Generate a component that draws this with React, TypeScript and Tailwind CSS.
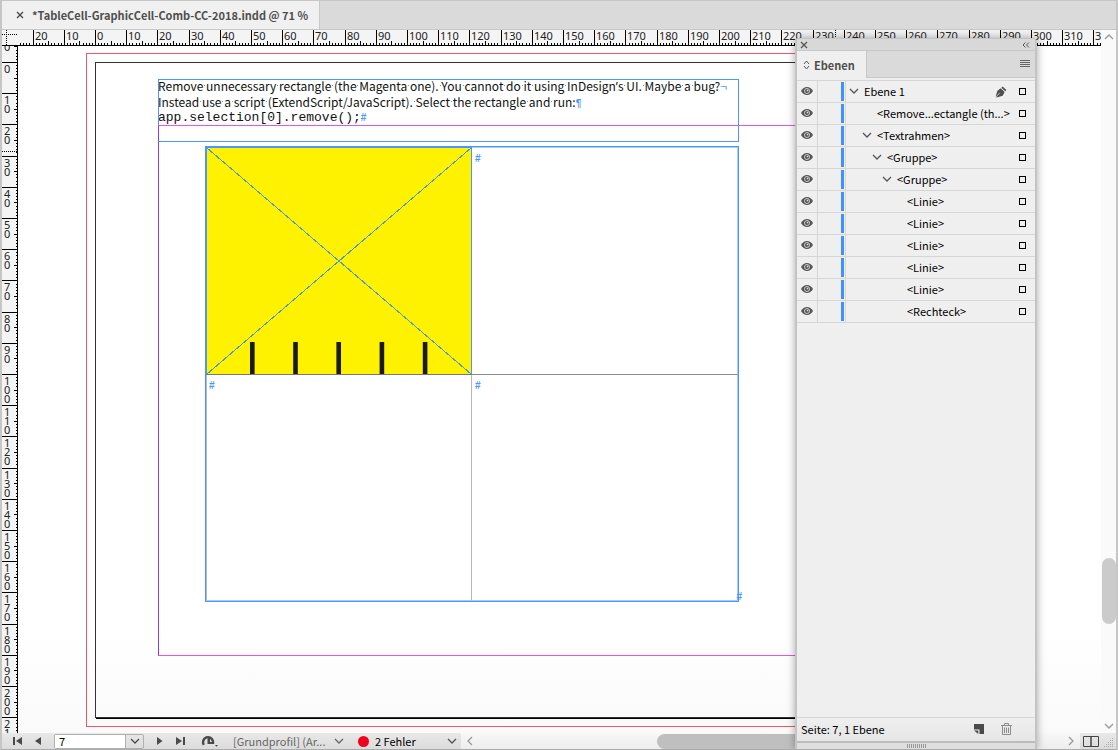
import React from "react";

const MM = 3.12; // pixels per millimetre at 71 %

interface Layer {
  name: string;
  indent: string;
  open?: boolean;
  pen?: boolean;
}

const layers: Layer[] = [
  { name: "Ebene 1", indent: "pl-[3px]", open: true, pen: true },
  { name: "<Remove...ectangle (th...>", indent: "pl-[31px]" },
  { name: "<Textrahmen>", indent: "pl-[16px]", open: true },
  { name: "<Gruppe>", indent: "pl-[26px]", open: true },
  { name: "<Gruppe>", indent: "pl-[36px]", open: true },
  { name: "<Linie>", indent: "pl-[61px]" },
  { name: "<Linie>", indent: "pl-[61px]" },
  { name: "<Linie>", indent: "pl-[61px]" },
  { name: "<Linie>", indent: "pl-[61px]" },
  { name: "<Linie>", indent: "pl-[61px]" },
  { name: "<Rechteck>", indent: "pl-[61px]" },
];

const range = (from: number, to: number) => Array.from({ length: to - from + 1 }, (_, i) => from + i);

const Chevron = ({ className = "", dir = "down" }: { className?: string; dir?: "down" | "up" | "left" | "right" }) => {
  const d = {
    down: "M1 3l4 4 4-4",
    up: "M1 7l4-4 4 4",
    left: "M7 1L3 5l4 4",
    right: "M3 1l4 4-4 4",
  }[dir];
  return (
    <svg viewBox="0 0 10 10" className={`h-[10px] w-[10px] shrink-0 ${className}`} fill="none" stroke="currentColor" strokeWidth="1.3">
      <path d={d} />
    </svg>
  );
};

const EyeIcon = () => (
  <svg viewBox="0 0 12 8" className="h-2 w-3">
    <path d="M0 4C1.6 1.4 3.6 0 6 0S10.4 1.4 12 4C10.4 6.6 8.4 8 6 8S1.6 6.6 0 4z" fill="#555" />
    <circle cx="6" cy="4" r="2.5" fill="none" stroke="#d8d8d8" strokeWidth=".9" />
    <circle cx="6.5" cy="3.6" r=".8" fill="#e4e4e4" />
  </svg>
);

const PenIcon = () => (
  <svg viewBox="0 0 12 12" className="h-3 w-3">
    <path d="M7.6.6l3.8 3.4-1.2 1.3-3.8-3.5zM5.7 2.3l3.9 3.6-1.9 3.8-6.2 1.7L.7 10.6l1.7-5.9z" fill="#4f4f4f" />
    <path d="M.8 11.2L4.8 6.8" stroke="#efefef" strokeWidth=".7" />
  </svg>
);

const HorizontalRuler = () => (
  <svg className="h-4 min-w-0 flex-1 bg-[#f4f4f4]" shapeRendering="crispEdges">
    {range(-24, 600).map((mm) => {
      const x = Math.round(77 + mm * MM);
      const h = mm % 10 === 0 ? 16 : mm % 5 === 0 ? 5 : 3;
      return <rect key={mm} x={x} y={16 - h} width="1" height={h} fill="#000" />;
    })}
    {range(-2, 60).map((n) => (
      <text key={n} x={Math.round(77 + n * 10 * MM) + 2} y="10" className="fill-[#222] font-['Noto_Sans',sans-serif] text-[11px]">
        {Math.abs(n * 10)}
      </text>
    ))}
    <path d="M817.5 0v16" stroke="#000" strokeDasharray="1 1" />
    <rect x="0" y="15" width="100%" height="1" fill="#000" />
  </svg>
);

const VerticalRuler = () => (
  <svg className="h-full w-4 shrink-0 bg-[#f4f4f4]" shapeRendering="crispEdges">
    {range(-5, 400).map((mm) => {
      const y = Math.round(16 + mm * MM);
      const w = mm % 10 === 0 ? 16 : mm % 5 === 0 ? 4 : 2;
      return <rect key={mm} x={16 - w} y={y} width={w} height="1" fill="#000" />;
    })}
    {range(-1, 40).map((n) =>
      String(Math.abs(n * 10))
        .split("")
        .map((digit, i) => (
          <text key={`${n}-${i}`} x="2" y={Math.round(16 + n * 10 * MM) + 11 + i * 9} className="fill-[#222] font-['Noto_Sans',sans-serif] text-[11px]">
            {digit}
          </text>
        ))
    )}
    <path d="M0 105.5h16" stroke="#000" strokeDasharray="1 1" />
    <rect x="15" y="0" width="1" height="100%" fill="#000" />
  </svg>
);

// Text with the blue space markers of the hidden characters view
const MarkedText = ({ children }: { children: string }) => (
  <>
    {children.split(" ").map((word, i) => (
      <React.Fragment key={i}>
        {i > 0 && <span className="bg-[linear-gradient(#4a96ff,#4a96ff)] bg-[length:1px_1px] bg-center bg-no-repeat"> </span>}
        {word}
      </React.Fragment>
    ))}
  </>
);

const EndMark = () => <span className="font-['Liberation_Sans',sans-serif] text-[10px] leading-none font-bold text-[#4a96ff]">#</span>;

const CombGraphic = () => (
  <svg viewBox="0 0 264 226" className="block h-[226px] w-[264px]">
    <rect width="264" height="226" fill="#fff200" />
    <path d="M0 0l264 226M264 0L0 226" stroke="#4a96d8" strokeWidth="1" shapeRendering="crispEdges" />
    {[43, 86.2, 129.4, 172.6, 215.8].map((x) => (
      <rect key={x} x={x} y="194" width="4.6" height="32" fill="#1a1a18" />
    ))}
  </svg>
);

const Pasteboard = () => (
  <main className="relative min-w-0 flex-1 overflow-hidden bg-linear-to-b from-white from-85% to-[#fafafa]">
    {/* bleed, page and margins */}
    <div className="absolute top-[7px] left-[68px] h-[674px] w-[946px] border border-[#f0566b]" />
    <div className="absolute top-[16px] left-[77px] h-[656px] w-[928px] border border-[#333] shadow-[1px_1px_0_#000]" />
    <div className="absolute top-[79px] left-[140px] h-[531px] w-[802px] border border-[#e256e8] border-l-[#8a3cf0]" />
    <div className="absolute top-[33px] left-[140px] h-[63px] w-[581px] border border-l-0 border-[#4a96ff]">
      <div className="-mt-[2px] text-[12px] leading-[16px] whitespace-nowrap text-[#111] font-['Noto_Sans_CJK_SC',sans-serif]">
        <p className="h-4">
          <MarkedText>Remove unnecessary rectangle (the Magenta one). You cannot do it using InDesign</MarkedText>
          <span className="font-['Noto_Sans',sans-serif] leading-none">’</span>
          <MarkedText>s UI. Maybe a bug?</MarkedText>
          <span className="text-[#4a96ff]">¬</span>
        </p>
        <p className="h-4">
          <MarkedText>Instead use a script (ExtendScript/JavaScript). Select the rectangle and run:</MarkedText>
          <span className="font-['Liberation_Sans',sans-serif] text-[10px] leading-none font-bold text-[#4a96ff]">¶</span>
        </p>
        <p className="h-4 font-['Liberation_Mono',monospace] text-[13px]">
          app.selection[0].remove();
          <EndMark />
        </p>
      </div>
    </div>
    <div className="absolute top-[33px] left-[140px] h-[46px] w-px bg-[#4a96ff]" />

    {/* threaded table frame */}
    <div className="absolute top-[100px] left-[187px] h-[456px] w-[534px] border border-[#4a96ff]">
      <table className="h-[454px] w-[532px] table-fixed border-separate border-spacing-0 leading-[14px]">
        <tbody>
          <tr>
            <td className="h-[228px] w-[266px] border-t border-r border-b border-l border-[#4a96ff] border-b-[#777] p-0 align-top">
              <CombGraphic />
            </td>
            <td className="h-[228px] border-t border-r border-b border-[#a5cbff] border-b-[#8a8a8a] p-0 pl-[3px] align-top">
              <EndMark />
            </td>
          </tr>
          <tr>
            <td className="h-[226px] w-[266px] border-r border-b border-l border-[#b8b8b8] border-b-[#a5cbff] p-0 pl-[2px] align-top">
              <EndMark />
            </td>
            <td className="h-[226px] border-r border-b border-[#a5cbff] p-0 pl-[3px] align-top">
              <EndMark />
            </td>
          </tr>
        </tbody>
      </table>
      <span className="absolute -right-1 -bottom-px flex leading-none">
        <EndMark />
      </span>
    </div>
  </main>
);

const LayersPanel = () => (
  <aside className="absolute top-[37px] right-[79px] bottom-0 flex w-[242px] flex-col rounded-t border-x-2 border-t border-[#c4c4c4] bg-[#efefef] shadow-[0_0_8px_rgba(0,0,0,0.35)]">
    <header className="flex h-[12px] shrink-0 items-center justify-between border-b border-[#c8c8c8] bg-[#d8d8d8] pr-[5px] pl-[3px]">
      <button aria-label="Schließen">
        <svg viewBox="0 0 8 8" className="h-2 w-2" stroke="#555" strokeWidth="1.3">
          <path d="M1 1l6 6M7 1L1 7" />
        </svg>
      </button>
      <button aria-label="Einklappen">
        <svg viewBox="0 0 8 6" className="h-[6px] w-2" fill="none" stroke="#555">
          <path d="M3.5.5L1 3l2.500 2.500M7 .5L4.500 3 7 5.500" />
        </svg>
      </button>
    </header>
    <div className="flex h-[27px] shrink-0">
      <h2 className="flex w-[70px] items-center gap-1 border-r border-[#c8c8c8] pl-[6px] text-[11px] leading-4 font-bold text-[#4f4f4f]">
        <svg viewBox="0 0 7 10" className="h-[10px] w-[7px]" fill="none" stroke="#555">
          <path d="M1 4l2.500-3L6 4M1 6l2.500 3L6 6" />
        </svg>
        Ebenen
      </h2>
      <div className="flex flex-1 items-center justify-end border-b border-[#c8c8c8] bg-[#dadada] pr-[5px]">
        <button aria-label="Bedienfeldmenü">
          <svg viewBox="0 0 10 8" className="h-2 w-[10px]" shapeRendering="crispEdges" fill="#666">
            <path d="M0 0h10v1H0zM0 2h10v1H0zM0 4h10v1H0zM0 6h10v1H0z" />
          </svg>
        </button>
      </div>
    </div>
    <ul className="mt-[2px] flex-1 border-t border-[#d6d6d6]">
      {layers.map((layer, i) => (
        <li key={i} className="flex h-[22px] items-stretch border-b border-[#d6d6d6]">
          <button aria-label="Sichtbarkeit" className="flex w-[21px] items-center justify-center border-r border-[#d6d6d6] pb-px">
            <EyeIcon />
          </button>
          <span className="my-px ml-[23px] w-[3px] bg-[#4190ff]" />
          <div className={`ml-px flex flex-1 items-center border-l border-[#d6d6d6] pb-px ${layer.indent}`}>
            {layer.open && <Chevron className="mr-[5px] text-[#555]" />}
            <span className="text-[11px] leading-4 whitespace-nowrap text-black">{layer.name}</span>
          </div>
          {layer.pen && (
            <span className="mr-3 flex items-center">
              <PenIcon />
            </span>
          )}
          <button aria-label={`${layer.name} auswählen`} className="mr-[9px] h-[7px] w-[7px] self-center border border-black" />
        </li>
      ))}
    </ul>
    <footer className="flex h-[26px] shrink-0 items-center border-t border-b-2 border-t-[#d6d6d6] border-b-[#bcbcbc] bg-linear-to-b from-[#efefef] to-[#e6e6e6] pr-[23px] pb-px pl-1">
      <span className="flex-1 text-[11px] leading-4">Seite: 7, 1 Ebene</span>
      <button aria-label="Neue Ebene" className="mr-[17px]">
        <svg viewBox="0 0 10 10" className="h-[10px] w-[10px]" fill="#4a4a4a">
          <path d="M0 0h10v10H5.500V5.500H0zM0 6.500h4.300V10z" />
        </svg>
      </button>
      <button aria-label="Löschen">
        <svg viewBox="0 0 11 12" className="h-3 w-[11px]" fill="none" stroke="#8c8c8c">
          <path d="M0 2.500h11M3.500 2V.5h4V2M1.500 3v8.500h8V3M3.500 4.500v5.500M5.500 4.500v5.500M7.500 4.500v5.500" />
        </svg>
      </button>
    </footer>
    <div className="flex h-[6px] shrink-0 justify-center bg-[#dedede] pt-px">
      <svg viewBox="0 0 19 4" className="h-1 w-[19px]" shapeRendering="crispEdges" fill="#999">
        {range(0, 9).map((n) => (
          <rect key={n} x={n * 2} width="1" height="4" />
        ))}
      </svg>
    </div>
  </aside>
);

const StatusBar = () => (
  <footer className="flex h-4 shrink-0 bg-linear-to-b from-[#e8e8e8] to-[#dcdcdc] text-[11px]">
    <div className="flex w-[459px] shrink-0 items-center pl-[11px] text-[#4a4a4a]">
      <button aria-label="Erste Seite">
        <svg viewBox="0 0 9 8" className="h-2 w-[9px]" fill="currentColor">
          <path d="M0 0h2v8H0zM9 0v8L3 4z" />
        </svg>
      </button>
      <button aria-label="Vorherige Seite" className="ml-[13px]">
        <svg viewBox="0 0 6 8" className="h-2 w-[6px]" fill="currentColor">
          <path d="M6 0v8L0 4z" />
        </svg>
      </button>
      <div className="ml-[13px] flex h-[15px] w-[90px] rounded-xs border border-[#b0b0b0]">
        <input aria-label="Seite" defaultValue="7" className="w-0 flex-1 bg-white pl-1 text-[11px] leading-3 text-black outline-none" />
        <button aria-label="Seite wählen" className="flex w-[18px] items-center justify-center border-l border-[#b0b0b0]">
          <Chevron />
        </button>
      </div>
      <button aria-label="Nächste Seite" className="ml-[13px]">
        <svg viewBox="0 0 6 8" className="h-2 w-[6px]" fill="currentColor">
          <path d="M0 0v8l5.500-4z" />
        </svg>
      </button>
      <button aria-label="Letzte Seite" className="ml-[13px]">
        <svg viewBox="0 0 9 8" className="h-2 w-[9px]" fill="currentColor">
          <path d="M7 0h2v8H7zM0 0v8l6-4z" />
        </svg>
      </button>
      <button aria-label="Dokumentstatus" className="ml-4">
        <svg viewBox="0 0 17 12" className="h-3 w-[17px]">
          <path d="M2.800 9.800A5 5 0 1 1 12 6.500V9" fill="none" stroke="currentColor" strokeWidth="2.400" />
          <path d="M6.500 3H9v4h3v2H6.500z" fill="currentColor" />
          <path d="M14 10h3l-1.500 1.800z" fill="currentColor" />
        </svg>
      </button>
      <button className="ml-[15px] flex w-[111px] items-center justify-between leading-4 text-[#666]">
        [Grundprofil] (Ar...
        <Chevron />
      </button>
      <span className="ml-[14px] h-[11px] w-[11px] rounded-full bg-[#f2001d]" />
      <button className="ml-[6px] flex w-[82px] items-center justify-between leading-4 text-black">
        2 Fehler
        <Chevron className="text-[#555]" />
      </button>
    </div>
    <div className="flex min-w-0 flex-1 items-center bg-linear-to-b from-[#f8f8f8] to-[#ededed] px-1 text-[#999]">
      <Chevron dir="left" />
      <div className="mr-12 ml-[182px] h-[15px] flex-1 rounded-full bg-[#bfbfbf]" />
      <Chevron dir="right" />
    </div>
    <button aria-label="Layoutansicht teilen" className="flex w-[22px] items-center justify-center">
      <svg viewBox="0 0 16 11" className="h-[11px] w-4" fill="none" stroke="#444">
        <path d="M.5.5h15v10H.5z" />
        <path d="M8 .5v10" strokeWidth="1.500" />
      </svg>
    </button>
    <svg viewBox="0 0 10 10" className="mx-[2px] mb-px h-[10px] w-[10px] self-end" shapeRendering="crispEdges" fill="#aaa">
      {range(0, 4).map((row) => range(4 - row, 4).map((col) => <rect key={`${row}-${col}`} x={col * 2} y={row * 2} width="1" height="1" />))}
    </svg>
  </footer>
);

export default function App() {
  return (
    <div className="relative flex h-screen flex-col overflow-hidden border-x-2 border-t border-b border-[#c6c6c6] border-b-[#ababab] bg-[#dadada] font-['Noto_Sans_CJK_SC',sans-serif]">
      <nav className="flex h-[29px] shrink-0 border-b border-[#c8c8c8]">
        <div className="flex w-[318px] items-center gap-2 border-r border-[#c8c8c8] bg-[#f0f0f0] pl-[14px] text-[11px] leading-4 font-bold whitespace-nowrap text-[#4f4f4f]">
          <button aria-label="Dokument schließen">
            <svg viewBox="0 0 8 8" className="h-2 w-2" stroke="#444" strokeWidth="1.3">
              <path d="M1 1l6 6M7 1L1 7" />
            </svg>
          </button>
          *TableCell-GraphicCell-Comb-CC-2018.indd @ 71 %
        </div>
      </nav>
      <div className="flex min-h-0 flex-1">
        <div className="flex min-w-0 flex-1 flex-col">
          <div className="flex shrink-0">
            <svg viewBox="0 0 16 16" className="h-4 w-4 shrink-0 bg-[#f4f4f4]" shapeRendering="crispEdges">
              <path d="M4.500 0v16M0 4.500h16" stroke="#000" strokeDasharray="1 1" />
              <path d="M0 15.500h16" stroke="#000" />
            </svg>
            <HorizontalRuler />
          </div>
          <div className="flex min-h-0 flex-1">
            <VerticalRuler />
            <Pasteboard />
          </div>
        </div>
        <div className="flex w-[15px] shrink-0 flex-col items-center bg-[#fafafa] py-[2px] text-[#999]">
          <Chevron dir="up" />
          <div className="flex-[516]" />
          <div className="h-[66px] w-[14px] rounded-full bg-[#cbcbcb]" />
          <div className="flex-[97]" />
          <Chevron />
        </div>
      </div>
      <StatusBar />
      <LayersPanel />
    </div>
  );
}
